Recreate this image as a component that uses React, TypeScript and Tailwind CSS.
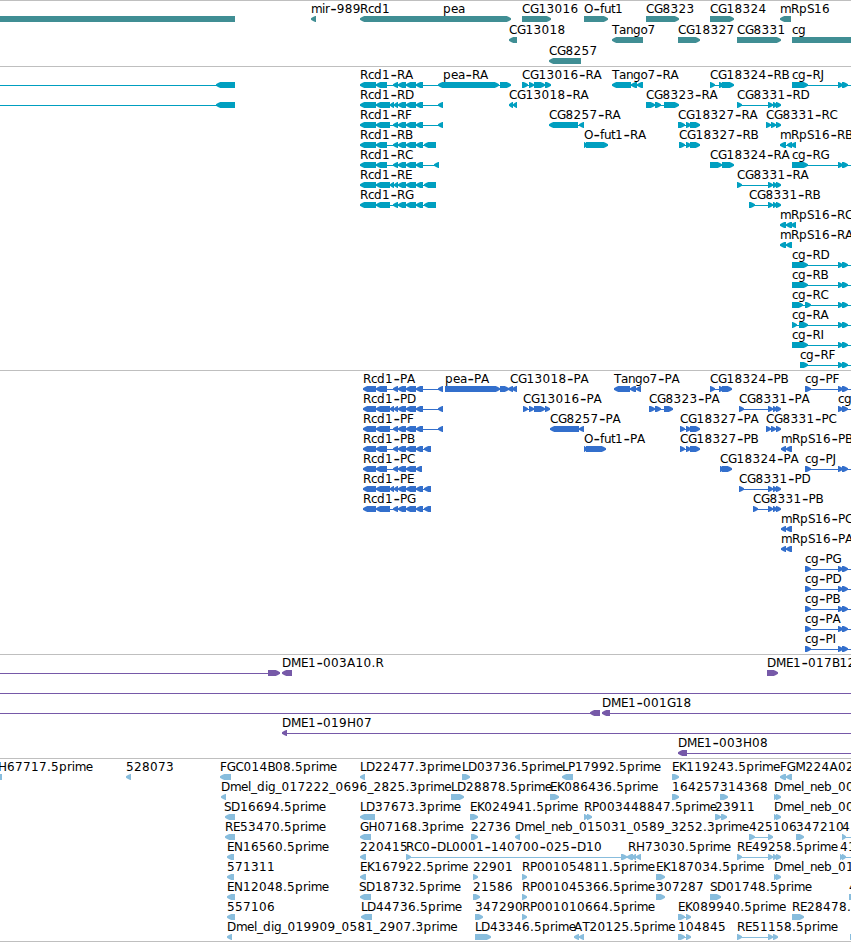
type Feature = {
  row: number;
  dir: "<" | ">";
  exons: number[][];
  label?: string;
  labelX?: number;
  lineTo?: number;
  lineFrom?: number;
};

type TrackProps = {
  name: string;
  features: Feature[];
  color: string;
  step?: number;
  className: string;
};

const advances: Record<string, number> = {
  A: 8.5, B: 7.6, C: 8, D: 9, E: 7, F: 6.8, G: 8.6, H: 9, I: 3, J: 3, K: 7.2, L: 6, M: 10, N: 9,
  O: 9, P: 7, R: 8, S: 7, T: 7, a: 7, b: 8, c: 6, d: 8, e: 7, f: 4, g: 7.5, i: 3, l: 3,
  m: 11, n: 7, o: 7, p: 8, r: 4.8, t: 4, u: 7, "-": 7, _: 6, ".": 4,
};

// shorthand: row, direction, label, exon ranges, extras
const f = (
  row: number,
  dir: "<" | ">",
  label: string,
  ranges: string,
  extra: Partial<Feature> = {},
): Feature => ({
  row,
  dir,
  label,
  exons: ranges ? ranges.split(" ").map((r) => r.split(":").map(Number)) : [],
  ...extra,
});

const OFF = { lineTo: 871 };

const genes: Feature[] = [
  f(0, "<", "", "-20:235"),
  f(0, "<", "mir-989", "311:316"),
  f(0, "<", "Rcd1", "360:443"),
  f(0, ">", "pea", "443:511"),
  f(0, ">", "CG13016", "522:551"),
  f(0, ">", "O-fut1", "584:608"),
  f(0, ">", "CG8323", "646:679"),
  f(0, ">", "CG18324", "710:734"),
  f(0, "<", "mRpS16", "780:791"),
  f(1, "<", "CG13018", "509:517"),
  f(1, "<", "Tango7", "612:643"),
  f(1, ">", "CG18327", "678:700"),
  f(1, ">", "CG8331", "737:781"),
  f(1, ">", "cg", "792:871"),
  f(2, "<", "CG8257", "549:581"),
];

const mid = "398:406 406:416 416:423";

const transcripts: Feature[] = [
  f(0, "<", "", "216:235", { lineFrom: -20 }),
  f(1, "<", "", "216:235", { lineFrom: -20 }),
  f(0, "<", "Rcd1-RA", `360:376 376:387 393:398 ${mid} 438:443`),
  f(1, "<", "Rcd1-RD", `360:376 376:390 390:394 394:398 ${mid} 438:443`),
  f(2, "<", "Rcd1-RF", `360:376 376:390 393:398 ${mid} 438:443`),
  f(3, "<", "Rcd1-RB", `360:376 376:387 393:398 ${mid} 424:436`),
  f(4, "<", "Rcd1-RC", `360:376 376:387 393:398 ${mid} 434:439`),
  f(5, "<", "Rcd1-RE", `360:376 376:390 390:394 394:398 ${mid} 424:436`),
  f(6, "<", "Rcd1-RG", `360:376 376:390 393:398 ${mid} 424:436`),
  f(0, ">", "pea-RA", "443:499 500:511"),
  f(0, ">", "CG13016-RA", "522:528 529:534 534:545 545:551"),
  f(1, "<", "CG13018-RA", "509:513 513:517"),
  f(2, "<", "CG8257-RA", "549:578 579:584"),
  f(3, ">", "O-fut1-RA", "584:587 586:608"),
  f(0, "<", "Tango7-RA", "612:631 631:637 637:643"),
  f(1, ">", "CG8323-RA", "646:655 655:661 664:679"),
  f(2, ">", "CG18327-RA", "678:685 686:691 690:700"),
  f(3, ">", "CG18327-RB", "679:685 686:691 690:700"),
  f(0, ">", "CG18324-RB", "710:715 719:724 722:734"),
  f(4, ">", "CG18324-RA", "710:722 722:734"),
  f(1, ">", "CG8331-RD", "737:742 768:773 773:777 776:781"),
  f(2, ">", "CG8331-RC", "766:771 771:776 776:781"),
  f(5, ">", "CG8331-RA", "737:742 768:773 773:777 776:781"),
  f(6, ">", "CG8331-RB", "749:755 768:773 773:777 776:781"),
  f(3, "<", "mRpS16-RB", "780:786 787:792 791:796"),
  f(7, "<", "mRpS16-RC", "780:786 786:792 791:796"),
  f(8, "<", "mRpS16-RA", "780:786 786:792"),
  f(0, ">", "cg-RJ", "792:808 838:843 842:848", OFF),
  f(4, ">", "cg-RG", "792:808 838:843 842:848", OFF),
  f(9, ">", "cg-RD", "792:808 838:843 842:848", OFF),
  f(10, ">", "cg-RB", "792:808 838:843 842:848", OFF),
  f(11, ">", "cg-RC", "792:803 805:811 838:843 842:848", OFF),
  f(12, ">", "cg-RA", "792:797 799:808 838:843 842:848", OFF),
  f(13, ">", "cg-RI", "792:808 838:843 842:848", OFF),
  f(14, ">", "cg-RF", "800:808 838:843 842:848", OFF),
];

const proteins: Feature[] = [
  f(0, "<", "Rcd1-PA", `363:376 376:387 393:398 ${mid} 438:443`),
  f(1, "<", "Rcd1-PD", `363:376 376:390 390:394 394:398 ${mid} 438:443`),
  f(2, "<", "Rcd1-PF", `363:376 376:390 393:398 ${mid} 438:443`),
  f(3, "<", "Rcd1-PB", `363:376 376:387 393:398 ${mid} 424:431`),
  f(4, "<", "Rcd1-PC", "363:376 376:387 393:398 398:406 406:416 416:422"),
  f(5, "<", "Rcd1-PE", `363:376 376:390 390:394 394:398 ${mid} 424:431`),
  f(6, "<", "Rcd1-PG", `363:376 376:390 393:398 ${mid} 424:431`),
  f(0, ">", "pea-PA", "445:500 500:509"),
  f(0, "<", "CG13018-PA", "508:513 512:517", { labelX: 510 }),
  f(1, ">", "CG13016-PA", "523:528 529:534 534:545 545:550"),
  f(2, "<", "CG8257-PA", "550:579 579:584"),
  f(3, ">", "O-fut1-PA", "584:587 586:606"),
  f(0, "<", "Tango7-PA", "614:630 630:636 636:641"),
  f(1, ">", "CG8323-PA", "649:655 655:661 664:673"),
  f(2, ">", "CG18327-PA", "680:685 686:691 690:700"),
  f(3, ">", "CG18327-PB", "680:685 686:691 690:700"),
  f(0, ">", "CG18324-PB", "710:715 719:724 722:732"),
  f(4, ">", "CG18324-PA", "720:724 722:732"),
  f(1, ">", "CG8331-PA", "739:744 768:773 773:777 776:781"),
  f(2, ">", "CG8331-PC", "766:771 771:776 776:781"),
  f(5, ">", "CG8331-PD", "739:744 768:773 773:777 776:781"),
  f(6, ">", "CG8331-PB", "753:758 768:773 773:777 776:781"),
  f(3, "<", "mRpS16-PB", "781:786 786:792"),
  f(7, "<", "mRpS16-PC", "781:786 786:792"),
  f(8, "<", "mRpS16-PA", "781:786 786:792"),
  f(0, ">", "cg-PF", "805:811 838:843 842:848", OFF),
  f(1, ">", "cg", "838:843 842:848", OFF),
  f(4, ">", "cg-PJ", "805:811 838:843 842:848", OFF),
  f(9, ">", "cg-PG", "805:811 838:843 842:848", OFF),
  f(10, ">", "cg-PD", "805:811 838:843 842:848", OFF),
  f(11, ">", "cg-PB", "805:811 838:843 842:848", OFF),
  f(12, ">", "cg-PA", "805:811 838:843 842:848", OFF),
  f(13, ">", "cg-PI", "805:811 838:843 842:848", OFF),
];

const bacEnds: Feature[] = [
  f(0, ">", "", "268:280", { lineFrom: -20 }),
  f(0, "<", "DME1-003A10.R", "282:292"),
  f(0, ">", "DME1-017B12", "767:778"),
  f(1, ">", "", "", { lineFrom: -20, lineTo: 871 }),
  f(2, "<", "", "590:600", { lineFrom: -20 }),
  f(2, "<", "DME1-001G18", "602:610", OFF),
  f(3, "<", "DME1-019H07", "282:287", OFF),
  f(4, "<", "DME1-003H08", "678:687", OFF),
];

const ests: Feature[] = [
  f(0, "<", "H67717.5prime", "-20:2", { labelX: -2 }),
  f(0, "<", "528073", "126:131"),
  f(0, "<", "FGC014B08.5prime", "220:231"),
  f(1, "<", "Dmel_dig_017222_0696_2825.3prime", "221:226"),
  f(2, "<", "SD16694.5prime", "225:235", { labelX: 224 }),
  f(3, "<", "RE53470.5prime", "225:235"),
  f(4, "<", "EN16560.5prime", "227:234"),
  f(5, "<", "571311", "227:234"),
  f(6, "<", "EN12048.5prime", "227:235"),
  f(7, "<", "557106", "227:235"),
  f(8, "<", "Dmel_dig_019909_0581_2907.3prime", "227:232"),

  f(0, "<", "LD22477.3prime", "360:365"),
  f(0, ">", "LD03736.5prime", "462:470"),
  f(0, "<", "LP17992.5prime", "562:573"),
  f(1, ">", "LD28878.5prime", "451:464"),
  f(1, ">", "EK086436.5prime", "550:559"),
  f(2, "<", "LD37673.3prime", "360:375"),
  f(2, ">", "EK024941.5prime", "470:478"),
  f(2, ">", "RP003448847.5prime", "584:588 587:592"),
  f(3, "<", "GH07168.3prime", "360:371"),
  f(3, ">", "22736", "471:478"),
  f(3, "<", "Dmel_neb_015031_0589_3252.3prime", "515:520"),
  f(4, "<", "220415", "360:366"),
  f(4, ">", "RC0-DL0001-140700-025-D10", "406:411 621:627"),
  f(4, "<", "RH73030.5prime", "627:633 632:636 636:641", { labelX: 628 }),
  f(5, "<", "EK167922.5prime", "360:366"),
  f(5, ">", "22901", "473:478"),
  f(5, ">", "RP001054811.5prime", "522:527"),
  f(6, "<", "SD18732.5prime", "360:371", { labelX: 359 }),
  f(6, ">", "21586", "473:480"),
  f(6, ">", "RP001045366.5prime", "522:527"),
  f(7, "<", "LD44736.5prime", "361:372"),
  f(7, ">", "347290", "475:483"),
  f(7, ">", "RP001010664.5prime", "522:527"),
  f(8, ">", "LD43346.5prime", "475:491"),
  f(8, "<", "AT20125.5prime", "574:579 579:584"),

  f(0, ">", "EK119243.5prime", "672:679"),
  f(0, "<", "FGM224A02", "780:786 786:792"),
  f(1, ">", "164257", "672:679"),
  f(1, ">", "314368", "720:728"),
  f(1, ">", "Dmel_neb_00", "774:777 776:781"),
  f(2, ">", "23911", "715:721 721:727"),
  f(2, ">", "Dmel_neb_00", "774:777 776:781"),
  f(3, ">", "425106", "749:755 768:773"),
  f(3, ">", "347210", "796:804"),
  f(3, ">", "4", "842:846", OFF),
  f(4, ">", "RE49258.5prime", "737:742 768:773 773:777 776:781"),
  f(4, ">", "41", "840:843 842:846", OFF),
  f(5, ">", "EK187034.5prime", "656:665"),
  f(5, ">", "Dmel_neb_01", "774:777 776:781"),
  f(6, ">", "307287", "656:665"),
  f(6, ">", "SD01748.5prime", "710:721"),
  f(6, ">", "4", "849:860"),
  f(7, ">", "EK089940.5prime", "678:685 686:691"),
  f(7, ">", "RE28478.", "792:804"),
  f(8, ">", "104845", "678:685 686:691"),
  f(8, ">", "RE51158.5prime", "737:742 768:773 773:778"),
  f(8, ">", "", "850:860"),
];

// bar with a rounded-off arrow head on the side it points to
function exonPoints([a, b]: number[], dir: "<" | ">", y: number) {
  const len = Math.min(5, b - a);
  const tip = dir === "<" ? a : b;
  const tail = dir === "<" ? b : a;
  const s = dir === "<" ? 1 : -1;
  return [
    [tip, y + 2.3],
    [tip + s * len * 0.4, y + 1],
    [tip + s * len * 0.85, y],
    [tail, y],
    [tail, y + 6],
    [tip + s * len * 0.85, y + 6],
    [tip + s * len * 0.4, y + 5],
    [tip, y + 3.7],
  ]
    .map((p) => p.join(","))
    .join(" ");
}

function Label({ text, x, y }: { text: string; x: number; y: number }) {
  const xs: number[] = [];
  let pos = x;
  for (const ch of text) {
    xs.push(ch === "-" ? pos + 0.4 : pos);
    pos += advances[ch] ?? 8;
  }
  // hyphens are drawn wider than the font's own, then the baseline is restored
  return (
    <text x={xs.join(" ")} y={y} className="fill-black text-[12px]">
      {text.split(/(-)/).map((part, i) =>
        part === "-" ? (
          <tspan key={i} dy={1} className="text-[18px]">
            -
          </tspan>
        ) : (
          <tspan key={i} dy={i > 0 ? -1 : 0}>
            {part}
          </tspan>
        ),
      )}
    </text>
  );
}

function Track({ name, features, color, step = 20, className }: TrackProps) {
  return (
    <section aria-label={name} className={`shrink-0 border-t border-[#bfbfbf] ${className}`}>
      <svg className={`block h-full w-full overflow-visible ${color}`}>
        {features.map((item, i) => {
          const y = 15 + item.row * step;
          const start = item.lineFrom ?? item.exons[0][0];
          const end = item.lineTo ?? item.exons[item.exons.length - 1][1];
          return (
            <g key={i}>
              {(item.exons.length !== 1 || item.lineFrom !== undefined || item.lineTo !== undefined) && (
                <rect x={start} y={y + 3} width={end - start} height={1} />
              )}
              {item.exons.map((exon, j) => (
                <polygon key={j} points={exonPoints(exon, item.dir, y)} />
              ))}
              {item.label && <Label text={item.label} x={item.labelX ?? start} y={y - 3} />}
            </g>
          );
        })}
      </svg>
    </section>
  );
}

export default function App() {
  return (
    <main className="flex h-[942px] w-[851px] flex-col overflow-hidden bg-white font-['DejaVu_Sans',sans-serif]">
      <Track name="Genes" features={genes} step={21} color="fill-[#408e94]" className="h-[66px]" />
      <Track name="Transcripts" features={transcripts} color="fill-[#009fc0]" className="h-[304px]" />
      <Track name="Proteins" features={proteins} color="fill-[#336fcc]" className="h-[284px]" />
      <Track name="BAC ends" features={bacEnds} color="fill-[#7659a8]" className="h-[104px]" />
      <Track name="ESTs" features={ests} color="fill-[#88bddd]" className="h-[183px]" />
      <div className="h-px shrink-0 bg-[#bfbfbf]" />
    </main>
  );
}
